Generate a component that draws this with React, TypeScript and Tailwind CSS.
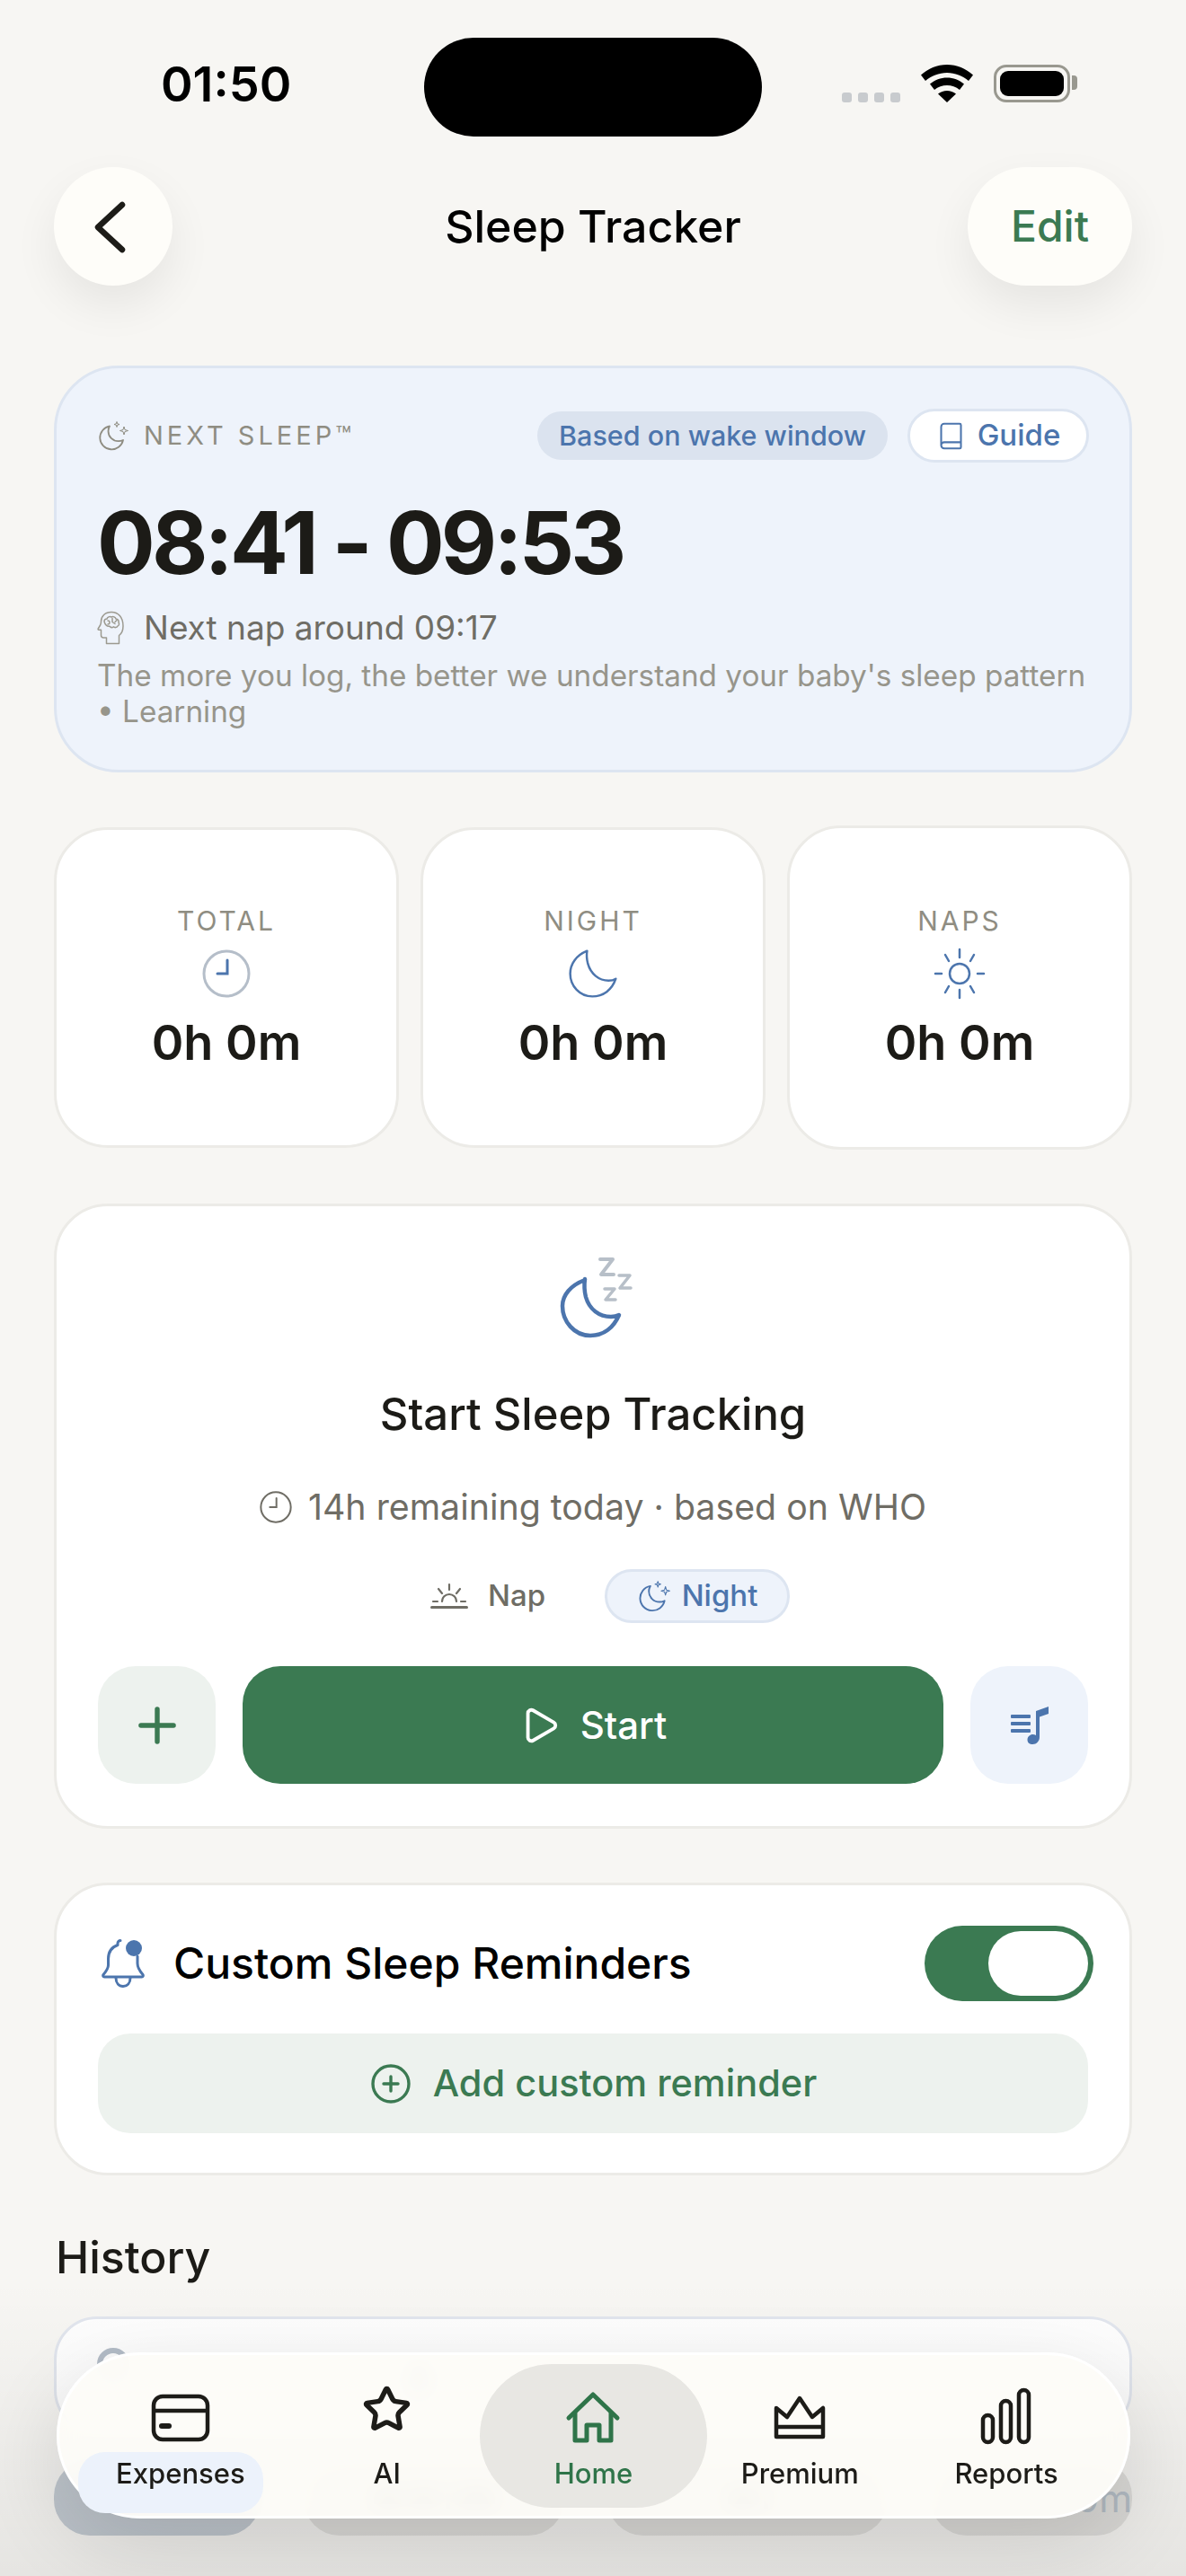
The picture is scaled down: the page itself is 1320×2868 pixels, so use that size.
import React from 'react';
import { Plus, Play, Book, CirclePlus, Star } from 'lucide-react';

const MoonSparkles = ({ className }: { className?: string }) => (
  <svg viewBox="0 0 36 36" fill="none" stroke="currentColor" strokeWidth="1.8" strokeLinejoin="round" className={className}>
    <path d="M14 7.500A13 13 0 1 0 29 23c-1.700.8-3.400 1.200-5.200 1.200C17.500 24.200 12.500 19.200 12.500 12.900c0-1.900.5-3.700 1.500-5.400z" />
    <path d="M22 2.500l.7 2.300 2.300.7-2.300.7-.7 2.300-.7-2.300-2.300-.7 2.300-.7z" strokeWidth="1" />
    <path d="M30 8l1 3.500 3.500 1-3.500 1-1 3.500-1-3.500-3.500-1 3.500-1z" strokeWidth="1" />
  </svg>
);

const HeadBrain = () => (
  <svg viewBox="0 0 30 38" fill="none" stroke="#9c9a90" strokeWidth="1.500" strokeLinejoin="round" strokeLinecap="round" className="w-[30px] h-[38px]">
    <path d="M16 1.500C9 1.500 4.500 6 4.500 12c0 1.500 0 2.500-.9 4L1.200 20c-.3.6 0 1.200.7 1.200h2.600v6c0 1.500 1.200 2.700 2.700 2.700h3.300v6.600h14v-9c3-2.200 4.500-6 4.500-10.500C29 7 23.500 1.500 16 1.500z" />
    <path d="M8 12c0-2 1.500-3 3-3 .5-2 3-3 5-2 2-1 4.500 0 5 2 2 .2 3.500 2 3 4 1 1.500.5 3.500-1 4-1 2-3.500 2-4.500 .8-1.500 1-3.500 .8-4.500-.6-2.500.4-5-1.700-6-5.200z" />
    <path d="M12 11c1 0 2 .7 2 2s-1 2-2 2M17 8.500v4l3 2M22 10.500l-2 2" />
  </svg>
);

const Clock = ({ ring, hand, className }: { ring: string; hand: string; className?: string }) => (
  <svg viewBox="0 0 54 54" fill="none" strokeLinecap="round" className={className}>
    <circle cx="27" cy="27" r="25" stroke={ring} strokeWidth="3" />
    <path d="M28 12v15H17" stroke={hand} strokeWidth="3" />
  </svg>
);

const Moon = ({ className, stroke = 3 }: { className?: string; stroke?: number }) => (
  <svg viewBox="0 0 66 66" fill="none" stroke="#4c75ad" strokeWidth={stroke} strokeLinejoin="round" className={className}>
    <path d="M25 2C10 8 2 20 2 33c0 17 13 31 30 31 15 0 27-9 32-24-3 2-6 2.500-10 2.500-13 0-24-9-28-23-1.500-6-2-12-1-17.500z" />
  </svg>
);

const SunIcon = () => (
  <svg viewBox="0 0 60 60" fill="none" stroke="#4c75ad" strokeWidth="2.500" strokeLinecap="round" className="w-[60px] h-[60px]">
    <circle cx="30" cy="30" r="11" />
    <path d="M30 3v9M30 48v9M3 30h7M50 30h7M14 9l4 7M46 9l-4 7M14 51l4-7M46 51l-4-7" />
  </svg>
);

const SunriseIcon = () => (
  <svg viewBox="0 0 42 30" fill="none" stroke="#6f6d65" strokeWidth="2.200" strokeLinecap="round" className="w-[42px] h-[30px]">
    <path d="M1.500 27.500h39" strokeWidth="3" />
    <path d="M13 21a8 8 0 0 1 16 0" />
    <path d="M21 2v6M9 7l4 5M33 7l-4 5M3 21h5M34 21h5" />
  </svg>
);

const MusicList = () => (
  <svg viewBox="0 0 44 44" fill="#4c75ad" className="w-[44px] h-[44px]">
    <rect x="1" y="10" width="22" height="4" rx="1" />
    <rect x="1" y="18" width="22" height="4" rx="1" />
    <rect x="1" y="26" width="22" height="4" rx="1" />
    <path d="M29 6l14-5v8l-10 3.500V35c0 4.500-3.500 8-7.500 8S19.500 41 19.500 38c0-3.500 3-6 6-6 1.300 0 2.500.4 3.500 1z" />
  </svg>
);

const BellDot = () => (
  <svg viewBox="0 0 50 56" fill="none" stroke="#4c75ad" strokeWidth="3" strokeLinejoin="round" strokeLinecap="round" className="w-[50px] h-[56px]">
    <path d="M22 2.500c-1.500 0-3 1.200-3 3v2C12 10 8.500 16 8.500 23v7c0 4-2.500 7-5.500 10.500-.8 1-.2 2.500 1.200 2.500h41.600c1.400 0 2-1.500 1.200-2.500C44 37 41 33 41 28v-8" />
    <path d="M17 44c0 6 3.500 9.500 8 9.500s8-3.500 8-9.500" />
    <circle cx="37" cy="11" r="9" fill="#4c75ad" stroke="none" />
  </svg>
);

const NavIcon = ({ name }: { name: string }) => {
  const cls = 'w-[72px] h-[72px]';
  if (name === 'Expenses')
    return (
      <svg viewBox="0 0 72 72" fill="none" stroke="#1d1c18" strokeWidth="4.500" className={cls}>
        <rect x="6" y="13" width="60" height="48" rx="10" />
        <path d="M6 29h60" />
        <path d="M15 46h8" strokeWidth="6" strokeLinecap="round" />
      </svg>
    );
  if (name === 'AI')
    return (
      <div className="w-[72px] h-[72px] flex justify-center">
        <Star size={55} strokeWidth={2.400} color="#1d1c18" />
      </div>
    );
  if (name === 'Home')
    return (
      <svg viewBox="0 0 72 72" fill="none" stroke="#2f7449" strokeWidth="5" strokeLinejoin="round" strokeLinecap="round" className={cls}>
        <path d="M9 37L36 11l27 26" />
        <path d="M16 32v30h13V45h14v17h13V32" />
      </svg>
    );
  if (name === 'Premium')
    return (
      <svg viewBox="0 0 72 72" fill="none" stroke="#1d1c18" strokeWidth="4.500" strokeLinejoin="round" className={cls}>
        <path d="M10 58V26l12 10L36 15l14 21 12-10v32z" />
        <path d="M10 47h52" />
      </svg>
    );
  return (
    <svg viewBox="0 0 72 72" fill="none" stroke="#1d1c18" strokeWidth="4.500" className={cls}>
      <rect x="10" y="34" width="11" height="30" rx="5.500" />
      <rect x="30" y="18" width="11" height="46" rx="5.500" />
      <rect x="50" y="6" width="11" height="58" rx="5.500" />
    </svg>
  );
};

const stats = [
  { label: 'TOTAL', value: '0h 0m', icon: <Clock ring="#b5bec9" hand="#4c75ad" className="w-[54px] h-[54px]" /> },
  { label: 'NIGHT', value: '0h 0m', icon: <Moon className="w-[54px] h-[54px]" /> },
];

const tabs = ['Expenses', 'AI', 'Home', 'Premium', 'Reports'];

const StatCard = ({ label, value, icon, className = '' }: { label: string; value: string; icon: React.ReactNode; className?: string }) => (
  <div className={`flex flex-col items-center justify-center rounded-[60px] border-[3px] border-[#ecebe7] bg-white ${className}`}>
    <div className="text-[30px] leading-[36px] tracking-[3px] text-[#8f8d82]">{label}</div>
    <div className="mt-[11px] h-[60px] flex items-center">{icon}</div>
    <div className="mt-[15px] text-[54px] leading-[64px] font-semibold text-[#1c1b17]">{value}</div>
  </div>
);

export default function App() {
  return (
    <div className="relative w-[1320px] h-[2868px] overflow-hidden bg-[#f7f6f3] font-['Inter',sans-serif]">
      {/* status bar */}
      <div className="mt-[42px] h-[110px] grid grid-cols-[472px_376px_1fr] items-center">
        <div className="pl-[179px] -mt-[6px] text-[54px] font-semibold leading-none text-black">01:50</div>
        <div className="h-[110px] rounded-full bg-black" />
        <div className="flex items-start -mt-[8px] h-[42px] pl-[89px]">
          <div className="mt-[31px] flex gap-[7px]">
            {[0, 1, 2, 3].map((i) => (
              <div key={i} className="w-[11px] h-[11px] rounded-[3px] bg-[#c8cbce]" />
            ))}
          </div>
          <svg viewBox="0 0 58 42" fill="#000" className="ml-[23px] w-[58px] h-[42px]">
            <path d="M29 0c11 0 21 4.300 29 11.500l-5 6.500C46.500 12.500 38 9 29 9S11.500 12.500 5 18l-5-6.500C8 4.300 18 0 29 0z" />
            <path d="M29 14.500c7 0 13.500 2.500 19 7l-5 6.500c-4-3.200-9-5-14-5s-10 1.800-14 5l-5-6.500c5.500-4.500 12-7 19-7z" />
            <path d="M29 29c3.700 0 7 1.200 10 3.500L29 42 19 32.500c3-2.300 6.300-3.500 10-3.500z" />
          </svg>
          <div className="ml-[23px] relative w-[85px] h-[42px] rounded-[14px] border-[3px] border-[#99988f] p-[4px]">
            <div className="h-full w-full rounded-[9px] bg-black" />
            <div className="absolute -right-[11px] top-[9px] w-[6px] h-[16px] rounded-r-[4px] bg-[#99988f]" />
          </div>
        </div>
      </div>

      {/* header */}
      <div className="mt-[34px] px-[60px] h-[132px] grid grid-cols-[1fr_auto_1fr] items-center">
        <div>
          <div className="w-[132px] h-[132px] rounded-full bg-[#fefdf9] shadow-[0_22px_50px_rgba(0,0,0,0.07)] flex items-center justify-center">
            <svg viewBox="0 0 36 58" fill="none" stroke="#1d1c18" strokeWidth="6.500" strokeLinecap="round" strokeLinejoin="round" className="w-[36px] h-[58px] -ml-[9px] mt-[2px]">
              <path d="M32 4L5 29l27 25" />
            </svg>
          </div>
        </div>
        <div className="text-[50px] font-medium text-black leading-none">Sleep Tracker</div>
        <div className="flex justify-end">
          <div className="w-[183px] h-[132px] rounded-full bg-[#fefdf9] shadow-[0_22px_50px_rgba(0,0,0,0.07)] flex items-center justify-center text-[48px] font-medium text-[#3b7a52]">
            Edit
          </div>
        </div>
      </div>

      <div className="px-[60px] mt-[89px] flex flex-col">
        {/* next sleep */}
        <div className="h-[453px] rounded-[72px] border-[3px] border-[#dde5f1] bg-[#eef3fb] pl-[45px] pr-[45px] pt-[45px]">
          <div className="flex items-center justify-between h-[60px]">
            <div className="flex items-center gap-[16px] text-[#8f8d82]">
              <MoonSparkles className="w-[36px] h-[36px]" />
              <span className="text-[29px] tracking-[4px]">NEXT SLEEP™</span>
            </div>
            <div className="flex items-center gap-[22px]">
              <div className="h-[54px] px-[24px] rounded-full bg-[#dbe3ef] flex items-center text-[30.500px] font-medium text-[#4c75ad]">Based on wake window</div>
              <div className="h-[60px] w-[202px] rounded-full border-[3px] border-[#dde5f1] bg-white flex items-center justify-center gap-[13px] text-[33px] font-medium text-[#4c75ad]">
                <Book size={33} strokeWidth={1.500} />
                Guide
              </div>
            </div>
          </div>
          <div className="mt-[34px] text-[96px] leading-[110px] font-bold tracking-[-3.800px] text-[#1c1b17]">08:41 - 09:53</div>
          <div className="mt-[17px] flex items-center gap-[22px] h-[46px] text-[37px] text-[#6f6d65]">
            <HeadBrain />
            Next nap around 09:17
          </div>
          <div className="mt-[10px] text-[33.300px] leading-[40px] text-[#97958b]">
            The more you log, the better we understand your baby's sleep pattern
            <br />• Learning
          </div>
        </div>

        {/* stats */}
        <div className="mt-[61px] h-[357px] grid grid-cols-3 gap-[24px]">
          {stats.map((s) => (
            <StatCard key={s.label} {...s} />
          ))}
          <StatCard label="NAPS" value="0h 0m" icon={<SunIcon />} className="-my-[2px]" />
        </div>

        {/* start card */}
        <div className="mt-[62px] h-[696px] rounded-[60px] border-[3px] border-[#ecebe7] bg-white px-[46px] flex flex-col items-center">
          <svg viewBox="0 0 85 96" fill="none" className="mt-[54px] ml-[8px] w-[85px] h-[96px]">
            <path d="M29 28C13 34 4 45 4 57c0 17 13 33 31 33 15 0 26-9 32-23-3 1.500-6 2-9 2-13 0-24-8-28-22-1.500-6-2-13-1-20z" stroke="#4c75ad" strokeWidth="4.500" strokeLinejoin="round" />
            <path d="M46 5h14L47 22h14" stroke="#b7bfc8" strokeWidth="4" strokeLinejoin="round" strokeLinecap="round" />
            <path d="M67 23h12L68 37h12" stroke="#b7bfc8" strokeWidth="3.500" strokeLinejoin="round" strokeLinecap="round" />
            <path d="M51 38h11L52 50h11" stroke="#b7bfc8" strokeWidth="3.500" strokeLinejoin="round" strokeLinecap="round" />
          </svg>
          <div className="mt-[51px] text-[49px] leading-[62px] font-medium text-[#1c1b17]">Start Sleep Tracking</div>
          <div className="mt-[48px] h-[48px] flex items-center gap-[18px] text-[39.300px] text-[#6f6d65]">
            <Clock ring="#6f6d65" hand="#6f6d65" className="w-[36px] h-[36px]" />
            14h remaining today · based on WHO
          </div>
          <div className="mt-[45px] h-[60px] flex items-center ml-[38px]">
            <div className="flex items-center gap-[22px] text-[33px] text-[#6f6d65] font-medium">
              <SunriseIcon />
              Nap
            </div>
            <div className="ml-[66px] h-[60px] w-[206px] rounded-full border-[3px] border-[#dde5f1] bg-[#eef3fb] flex items-center justify-center gap-[12px] text-[33px] font-medium text-[#4c75ad]">
              <MoonSparkles className="w-[38px] h-[38px]" />
              Night
            </div>
          </div>
          <div className="mt-[48px] w-full flex gap-[30px]">
            <div className="w-[131px] h-[131px] rounded-[42px] bg-[#edf2ee] flex items-center justify-center text-[#3b7a52]">
              <Plus size={62} strokeWidth={2.100} />
            </div>
            <div className="flex-1 h-[131px] rounded-[42px] bg-[#3b7a52] flex items-center justify-center gap-[22px] text-[42px] font-medium text-white">
              <Play size={46} strokeWidth={2} />
              Start
            </div>
            <div className="w-[131px] h-[131px] rounded-[42px] bg-[#eef3fb] flex items-center justify-center">
              <MusicList />
            </div>
          </div>
        </div>

        {/* reminders */}
        <div className="mt-[60px] h-[326px] rounded-[60px] border-[3px] border-[#ecebe7] bg-white px-[46px] pt-[45px]">
          <div className="flex items-center justify-between h-[84px]">
            <div className="flex items-center gap-[31px] text-[48px] font-medium text-black ml-[3px]">
              <BellDot />
              Custom Sleep Reminders
            </div>
            <div className="w-[188px] h-[84px] -mr-[6px] rounded-full bg-[#3b7a52] flex justify-end items-center pr-[6px]">
              <div className="w-[111px] h-[72px] rounded-full bg-white" />
            </div>
          </div>
          <div className="mt-[36px] h-[111px] rounded-[36px] bg-[#edf2ee] flex items-center justify-center gap-[23px] text-[41.500px] font-medium text-[#3b7a52]">
            <CirclePlus size={48} strokeWidth={1.700} />
            Add custom reminder
          </div>
        </div>

        {/* history, mostly behind the tab bar */}
        <div className="mt-[60px] text-[50px] leading-[62px] font-medium text-[#1c1b17] ml-[2px]">History</div>
        <div className="mt-[35px] h-[130px] rounded-[48px] border-[3px] border-[#e2e6ee] bg-white px-[45px] pt-[32px] flex gap-[190px]">
          <div className="w-[36px] h-[36px] rounded-full border-[6px] border-[#b5bec9]" />
          <div className="mt-[22px] ml-[80px] w-[4px] h-[28px] bg-[#9aa2ad]" />
          <div className="mt-[20px] -ml-[150px] w-[16px] h-[30px] rounded-full bg-[#7f8fa5]" />
        </div>
        <div className="mt-[30px] flex gap-[48px] h-[84px]">
          <div className="w-[230px] rounded-[40px] bg-[#c5ccd3]" />
          <div className="w-[290px] rounded-[40px] bg-[#e2e1de] flex items-center justify-center gap-[10px]">
            <div className="w-[30px] h-[14px] bg-[#55534e]" />
            <div className="w-[30px] h-[14px] bg-[#55534e]" />
            <div className="w-[5px] h-[24px] bg-[#55534e]" />
            <div className="w-[40px] h-[14px] bg-[#55534e]" />
          </div>
          <div className="w-[312px] rounded-[40px] bg-[#e2e1de] flex items-center justify-center gap-[10px]">
            <div className="w-[30px] h-[14px] bg-[#55534e]" />
            <div className="w-[5px] h-[24px] bg-[#55534e]" />
          </div>
          <div className="flex-1 rounded-[40px] bg-[#e2e1de] flex items-center justify-end text-[42px] text-[#b9c2ca]">0m</div>
        </div>
      </div>

      {/* soft shade that sits under the tab bar */}
      <div className="absolute left-0 right-0 bottom-0 h-[330px] bg-gradient-to-b from-[#00000000] to-[#00000012]" />

      {/* floating tab bar */}
      <div className="absolute left-[63px] top-[2619px] w-[1195px] h-[185px] rounded-full border-[3px] border-[#ffffff] bg-[#fdfcf8]/95 backdrop-blur-md shadow-[0_30px_90px_rgba(0,0,0,0.12)] px-[20px] grid grid-cols-5">
        <div className="absolute left-[21px] top-[108px] w-[206px] h-[68px] rounded-[30px] bg-[#ecf2fb]" />
        {tabs.map((t) => (
          <div key={t} className={`relative flex flex-col items-center pt-[33px] ${t === 'Home' ? 'text-[#2f7449]' : 'text-[#1d1c18]'}`}>
            {t === 'Home' && <div className="absolute left-[-12px] right-[-12px] top-[10px] h-[160px] rounded-full bg-[#e8e7e3]" />}
            <div className="relative"><NavIcon name={t} /></div>
            <div className="relative mt-[8px] text-[31px] leading-[38px] font-medium">{t}</div>
          </div>
        ))}
      </div>
    </div>
  );
}
